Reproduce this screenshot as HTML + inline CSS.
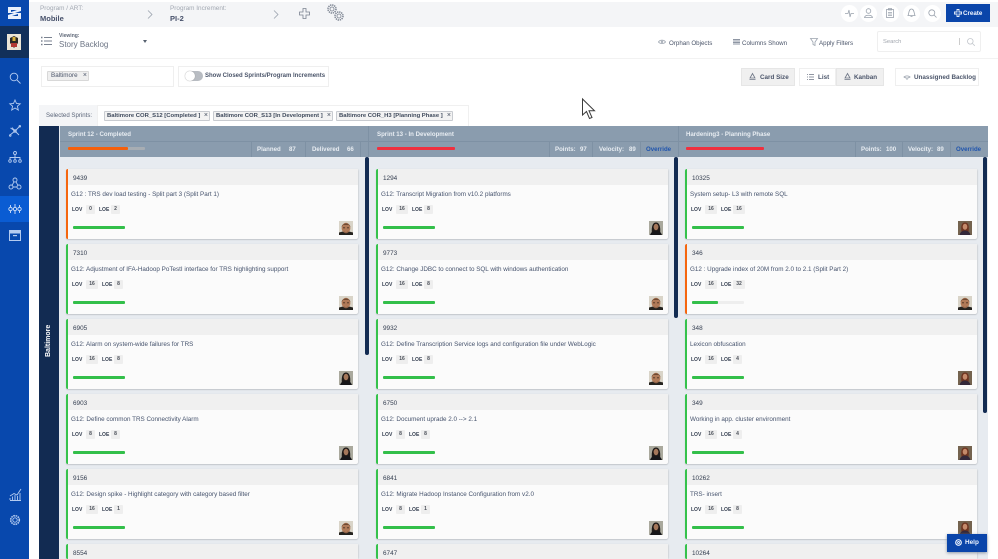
<!DOCTYPE html>
<html><head><meta charset="utf-8"><style>
html,body{margin:0;padding:0;background:#fff;overflow:hidden}
#p{position:relative;width:998px;height:559px;overflow:hidden;background:#fff;font-family:"Liberation Sans",sans-serif;color:#3a4660;font-size:6.2px;filter:blur(.3px)}
#p div,#p span,#p svg{position:absolute;white-space:nowrap;box-sizing:border-box}
svg{overflow:visible}
.i{fill:none;stroke:#b4cbf0;stroke-width:.9}
.g{fill:none;stroke:#9aa2ad;stroke-width:.8}
.c{width:292px;height:70px;background:#fbfbfb;border-left:2px solid #35c24c;border-radius:2px;box-shadow:0 1px 1px #c3c7cc,1px 0 1px #d5d8dc}
.c.o{border-left-color:#f5660f}
.h{left:0;top:0;right:0;height:16px;background:#f0f0f0}
.n{left:5px;top:6px;font-size:6.4px;color:#333d4f}
.t{left:3px;top:22px;font-size:6.3px;color:#46536d}
.l{top:38px;font-size:5px;font-weight:bold;color:#333d4f}
.b{top:36px;height:9px;background:#eee;border-radius:1px;font-size:5px;font-weight:bold;color:#4a4f58;text-align:center;line-height:9px}
.pr{left:5px;top:56.500px;width:52px;height:3px;background:#33bf4a;border-radius:1px}
.a{left:271px;top:52px;width:14px;height:14px}
.ht{color:#e8edf2;font-weight:bold;font-size:6.1px}
.d{width:1px;top:142px;height:15px;background:#7e91a4}
.chip{top:111px;height:10px;border:1px solid #c8cbd0;background:#f3f3f3;font-size:5.9px;font-weight:bold;line-height:8px;padding-left:2px;color:#3f4a5c;border-radius:1px}
.x{right:1px;top:0;font-size:7px;line-height:8px;font-weight:normal}
.btn{top:68px;height:18px;font-size:6.3px;line-height:18px;color:#4b556a;font-weight:bold;border:1px solid #efefef}
.tb{top:40px;font-size:6.2px;color:#4b556a}
.cir{top:5px;width:17px;height:17px;border-radius:50%;background:#fff}
</style></head><body><div id="p">
<svg width="0" height="0" style="position:absolute"><defs>
<symbol id="man" viewBox="0 0 14 14"><rect width="14" height="14" fill="#d9d4c8"/><path d="M0 14V11.500L4 10.500H10L14 11.500V14Z" fill="#25231f"/><ellipse cx="7" cy="7" rx="4.400" ry="5.200" fill="#b07a58"/><path d="M2.600 6C2.800 1.500 11.200 1.500 11.400 6L10 3.800H4Z" fill="#5a3a26"/><path d="M4 6.800H6M8 6.800H10" stroke="#4a3022" stroke-width=".9"/><path d="M4.500 10c1.500 1.600 3.500 1.600 5 0l-.8 1.800H5.300Z" fill="#7a5440"/></symbol>
<symbol id="wom" viewBox="0 0 14 14"><rect width="14" height="14" fill="#aaa99d"/><path d="M3 13C2 5 4 1.500 7 1.500S12 5 11 13Z" fill="#1f1a18"/><ellipse cx="7" cy="6" rx="2.400" ry="3.200" fill="#a4775a"/><path d="M1 14c1-3 3-4 6-4s5 1 6 4Z" fill="#17171a"/></symbol>
<symbol id="red" viewBox="0 0 14 14"><rect width="14" height="14" fill="#74634f"/><path d="M3.500 11C2.500 4 4 1.500 7 1.500S11.500 4 10.500 11Z" fill="#6e3420"/><ellipse cx="7" cy="5.800" rx="2.300" ry="3" fill="#c48a6b"/><path d="M1.500 14c.8-3 3-4.500 5.500-4.500s4.700 1.500 5.500 4.500Z" fill="#33283a"/></symbol>
</defs></svg>

<!-- top bars -->
<div style="left:29px;top:2px;width:969px;height:25px;background:#f4f5f7"></div>
<div style="left:29px;top:58px;width:969px;height:1px;background:#f2f2f2"></div>
<!-- sidebar -->
<div style="left:0;top:0;width:29px;height:559px;background:#0848ad"></div>
<div style="left:0;top:26px;width:29px;height:32px;background:#12305a"></div>
<div style="left:0;top:196px;width:29px;height:26px;background:#0a5cd3"></div>
<svg style="left:7px;top:6px" width="15" height="14" viewBox="0 0 15 14"><path d="M1 1H14V5L8 7H14V13H1V9L7 7H1Z" fill="#e8f0fb"/><path d="M4 4H10L4 6ZM11 10H5L11 8Z" fill="#0848ad"/></svg>
<svg style="left:7px;top:34px" width="14" height="16" viewBox="0 0 14 16"><rect width="14" height="16" fill="#ece6d6"/><path d="M3 4L7 2 11 4V9L7 14 3 9Z" fill="#2b2a25"/><path d="M4 9H10V13H4Z" fill="#b23a33"/><rect x="5.500" y="3" width="3" height="4" fill="#d8b13a"/></svg>
<svg class="i" style="left:9px;top:72px" width="12" height="12" viewBox="0 0 12 12"><circle cx="5" cy="5" r="3.800"/><path d="M8 8L11.500 11.500"/></svg>
<svg class="i" style="left:9px;top:99px" width="12" height="12" viewBox="0 0 12 12"><path d="M6 1L7.500 4.500 11.200 4.800 8.400 7.200 9.300 11 6 9 2.700 11 3.600 7.200.8 4.800 4.500 4.500Z"/></svg>
<svg class="i" style="left:9px;top:125px" width="12" height="12" viewBox="0 0 12 12"><path d="M1 10L6 6 11 1M1.500 3L6 6 10 10M3 2.500L6 6"/><circle cx="6" cy="6" r="1.300"/><circle cx="10.800" cy="1.200" r=".8"/><circle cx="1.200" cy="10.500" r=".8"/></svg>
<svg class="i" style="left:8px;top:151px" width="14" height="12" viewBox="0 0 14 12"><circle cx="7" cy="2" r="1.500"/><path d="M7 3.500V9M2 9V6.500H12V9"/><circle cx="2" cy="10" r="1.300"/><circle cx="7" cy="10" r="1.300"/><circle cx="12" cy="10" r="1.300"/></svg>
<svg class="i" style="left:8px;top:177px" width="14" height="13" viewBox="0 0 14 13"><circle cx="7" cy="3" r="2"/><circle cx="3" cy="10" r="2"/><circle cx="11" cy="10" r="2"/><path d="M6 5L4 8.300M8 5L10 8.300M5 10H9"/></svg>
<svg class="i" style="left:8px;top:203px;stroke:#d5e3f8" width="14" height="12" viewBox="0 0 14 12"><circle cx="2.500" cy="6" r="1.700"/><circle cx="7" cy="6" r="1.700"/><circle cx="11.500" cy="6" r="1.700"/><path d="M2.500 2V4M7 1V4M11.500 2V4M2.500 8V10M7 8V11M11.500 8V10"/></svg>
<svg style="left:9px;top:230px" width="12" height="11" viewBox="0 0 12 11"><rect x=".5" y=".5" width="11" height="10" fill="#0848ad" stroke="#b4cbf0"/><rect x="1" y="1" width="10" height="2.500" fill="#b4cbf0"/><rect x="4" y="5" width="4" height="1.200" fill="#b4cbf0"/></svg>
<svg class="i" style="left:9px;top:488px" width="13" height="13" viewBox="0 0 13 13"><path d="M1 8L5 5.500 8 7 12 1M1 12.500H12M1 10V12M3.500 8.500V12M6 7V12M8.500 8V12M11 5V12"/></svg>
<svg class="i" style="left:9px;top:514px" width="12" height="12" viewBox="0 0 12 12"><circle cx="6" cy="6" r="2.200"/><circle cx="6" cy="6" r="4.300" stroke-dasharray="1.600 .7" stroke-width="1.600"/></svg>

<!-- header -->
<div style="left:40px;top:5px;color:#a2a8b2;font-size:6.400px">Program / ART:</div>
<div style="left:40px;top:14px;color:#46506a;font-size:7.500px;font-weight:bold">Mobile</div>
<svg class="g" style="left:147px;top:10px" width="6" height="9"><path d="M1 .5L5 4.500 1 8.500"/></svg>
<div style="left:170px;top:5px;color:#a2a8b2;font-size:6.400px">Program Increment:</div>
<div style="left:170px;top:14px;color:#46506a;font-size:7.500px;font-weight:bold">PI-2</div>
<svg class="g" style="left:273px;top:10px" width="6" height="9"><path d="M1 .5L5 4.500 1 8.500"/></svg>
<svg class="g" style="left:299px;top:8px;stroke:#7a8290" width="11" height="11" viewBox="0 0 11 11"><path d="M4 .5H7V4H10.500V7H7V10.500H4V7H.5V4H4Z"/></svg>
<svg class="g" style="left:326px;top:3px;stroke:#7a8290" width="19" height="19" viewBox="0 0 19 19"><circle cx="6" cy="6" r="2"/><circle cx="6" cy="6" r="4" stroke-dasharray="1.300 .8" stroke-width="1.500"/><circle cx="13" cy="13" r="2"/><circle cx="13" cy="13" r="4" stroke-dasharray="1.300 .8" stroke-width="1.500"/></svg>
<div class="cir" style="left:841px"></div><div class="cir" style="left:860px"></div><div class="cir" style="left:882px"></div><div class="cir" style="left:903px"></div><div class="cir" style="left:924px"></div>
<svg class="g" style="left:845px;top:9px" width="9" height="9" viewBox="0 0 9 9"><path d="M0 4.500H3L4 1 5 8 6 4.500H9"/></svg>
<svg class="g" style="left:864px;top:8px" width="9" height="10" viewBox="0 0 9 10"><circle cx="4.500" cy="3" r="2.300"/><path d="M.5 9.500C1 6.500 8 6.500 8.500 9.500Z"/></svg>
<svg class="g" style="left:886px;top:8px" width="8" height="10" viewBox="0 0 8 10"><rect x=".5" y="1.500" width="7" height="8"/><path d="M2.500.5H5.500V2H2.500ZM2 4.500H6M2 6H6M2 7.500H6"/></svg>
<svg class="g" style="left:907px;top:8px" width="9" height="10" viewBox="0 0 9 10"><path d="M1 7.500C2 6 1.500 1 4.500 1S7 6 8 7.500ZM3.500 8.500H5.500"/></svg>
<svg class="g" style="left:928px;top:9px" width="9" height="9" viewBox="0 0 9 9"><circle cx="3.800" cy="3.800" r="3"/><path d="M6 6L8.500 8.500"/></svg>
<div style="left:946px;top:4px;width:44px;height:18px;background:#0a45aa;color:#f0f5ff;font-size:6.200px;font-weight:bold;line-height:19px;padding-left:17px">Create</div>
<svg class="i" style="left:954px;top:9px;stroke:#e8f0fb" width="8" height="8" viewBox="0 0 8 8"><path d="M3 .5H5V3H7.500V5H5V7.500H3V5H.5V3H3Z"/></svg>

<!-- row 2 -->
<svg class="g" style="left:41px;top:36px;stroke:#7a8290" width="11" height="10" viewBox="0 0 11 10"><path d="M3 1.500H11M3 5H11M3 8.500H11" stroke-width="1"/><path d="M0 1.500H1.500M0 5H1.500M0 8.500H1.500" stroke-width="1.500"/></svg>
<div style="left:59px;top:33px;font-size:5px;color:#5f6878;font-weight:bold">Viewing:</div>
<div style="left:59px;top:40px;font-size:8px;color:#6d7585">Story Backlog</div>
<div style="left:143px;top:40px;width:0;height:0;border:2px solid transparent;border-top:3px solid #55606f"></div>
<svg class="g" style="left:658px;top:39px" width="8" height="6" viewBox="0 0 8 6"><path d="M.5 3C2 .5 6 .5 7.500 3 6 5 2 5 .5 3Z"/><circle cx="4" cy="2.800" r=".8"/></svg>
<div class="tb" style="left:669px">Orphan Objects</div>
<svg style="left:733px;top:39px" width="7" height="6"><path d="M0 .5H7M0 2H7M0 3.500H7M0 5H7" stroke="#8e96a3"/></svg>
<div class="tb" style="left:742px">Columns Shown</div>
<svg class="g" style="left:810px;top:38px" width="8" height="8" viewBox="0 0 8 8"><path d="M.5.5H7.500L5 4V7.500L3 6.500V4Z"/></svg>
<div class="tb" style="left:819px">Apply Filters</div>
<div style="left:877px;top:31px;width:104px;height:21px;border:1px solid #efefef;border-radius:2px"></div>
<div style="left:883px;top:39px;font-size:5.800px;color:#a0a5ad">Search</div>
<div style="left:959px;top:38px;width:1px;height:7px;background:#ccc"></div>
<svg class="g" style="left:967px;top:38px;stroke:#c2c6cc" width="8" height="8" viewBox="0 0 8 8"><circle cx="3.300" cy="3.300" r="2.800"/><path d="M5.500 5.500L7.800 7.800"/></svg>

<!-- row 3 -->
<div style="left:41px;top:66px;width:133px;height:21px;border:1px solid #efefef"></div>
<div style="left:47px;top:71px;width:42px;height:10px;background:#efefef;border:1px solid #d8d8d8;font-size:6.300px;line-height:8px;padding-left:3px;color:#4b556a;border-radius:1px">Baltimore<span class="x">&#215;</span></div>
<div style="left:178px;top:66px;width:151px;height:21px;border:1px solid #efefef"></div>
<div style="left:185px;top:71px;width:18px;height:10px;border-radius:5px;background:#b8bcc2"></div>
<div style="left:185px;top:71px;width:10px;height:10px;border-radius:5px;background:#fff;box-shadow:0 0 1px #888"></div>
<div style="left:205px;top:73px;font-size:6px;font-weight:bold;color:#4b556a">Show Closed Sprints/Program Increments</div>

<div class="btn" style="left:741px;width:54px;background:#f0f0f0;border-color:#e6e6e6;padding-left:18px">Card Size</div>
<div class="btn" style="left:799px;width:37px;padding-left:18px">List</div>
<div class="btn" style="left:836px;width:48px;background:#f0f0f0;border-color:#e6e6e6;padding-left:17px">Kanban</div>
<div class="btn" style="left:895px;width:84px;padding-left:18px">Unassigned Backlog</div>
<svg class="g" style="left:749px;top:73px;stroke:#6d7585" width="7" height="7" viewBox="0 0 7 7"><path d="M3.500.5L6 5H1ZM.5 6.500H6.500"/></svg>
<svg class="g" style="left:807px;top:74px;stroke:#6d7585" width="7" height="6" viewBox="0 0 7 6"><path d="M2 .5H7M2 3H7M2 5.500H7M0 .5H1M0 3H1M0 5.500H1"/></svg>
<svg class="g" style="left:844px;top:73px;stroke:#6d7585" width="7" height="7" viewBox="0 0 7 7"><path d="M3.500.5L6 5H1ZM.5 6.500H6.500"/></svg>
<svg class="g" style="left:904px;top:75px" width="6" height="5" viewBox="0 0 6 5"><path d="M0 2C2 .5 4 .5 6 2 4 3.500 2 3.500 0 2ZM3 3V5"/></svg>

<!-- cursor -->
<svg style="left:581px;top:98px" width="15" height="22" viewBox="0 0 15 22"><path d="M1.500 1V17L5.500 13.500 8.500 20.500 11 19.500 8 12.800H13.500Z" fill="#fff" stroke="#3c3c3c" stroke-width="1"/></svg>

<!-- selected sprints -->
<div style="left:39px;top:105px;width:58px;height:21px;background:#f4f5f7"></div>
<div style="left:97px;top:105px;width:372px;height:21px;border:1px solid #f0f0f0;border-bottom:0"></div>
<div style="left:46px;top:112px;font-size:6.100px;color:#5a6478">Selected Sprints:</div>
<div class="chip" style="left:104px;width:106px">Baltimore COR_S12 [Completed ]<span class="x">&#215;</span></div>
<div class="chip" style="left:213px;width:120px">Baltimore COR_S13 [In Development ]<span class="x">&#215;</span></div>
<div class="chip" style="left:336px;width:117px">Baltimore COR_H3 [Planning Phase ]<span class="x">&#215;</span></div>

<!-- board -->
<div style="left:39px;top:126px;width:949px;height:433px;background:#e7ebf0"></div>
<div style="left:39px;top:126px;width:20px;height:433px;background:#122b52"></div>
<div style="left:42px;top:345px;width:14px;height:10px;line-height:10px;text-align:center;color:#fff;font-size:7px;font-weight:bold;transform:rotate(-90deg);overflow:visible"><span style="position:static">Baltimore</span></div>
<div style="left:60px;top:126px;width:928px;height:31px;background:#8a9cae"></div>
<div style="left:60px;top:141px;width:928px;height:1px;background:#7e91a4"></div>
<div style="left:59px;top:126px;width:1px;height:31px;background:#e7ebf0"></div>
<div style="left:368px;top:126px;width:1px;height:31px;background:#7e91a4"></div>
<div style="left:678px;top:126px;width:1px;height:31px;background:#7e91a4"></div>

<div class="ht" style="left:68px;top:131px">Sprint 12 - Completed</div>
<div class="ht" style="left:377px;top:131px">Sprint 13 - In Development</div>
<div class="ht" style="left:686px;top:131px">Hardening3 - Planning Phase</div>

<div style="left:68px;top:147px;width:77px;height:3px;background:#a7adb3;border-radius:1px"></div>
<div style="left:68px;top:147px;width:60px;height:3px;background:#f5600c;border-radius:1px"></div>
<div style="left:377px;top:147px;width:78px;height:3px;background:#f0303f;border-radius:1px"></div>
<div style="left:686px;top:147px;width:78px;height:3px;background:#f0303f;border-radius:1px"></div>

<div class="d" style="left:251px"></div><div class="d" style="left:305px"></div><div class="d" style="left:360px"></div>
<div class="ht" style="left:257px;top:146px">Planned</div><div class="ht" style="left:289px;top:146px">87</div>
<div class="ht" style="left:312px;top:146px">Delivered</div><div class="ht" style="left:347px;top:146px">66</div>

<div class="d" style="left:549px"></div><div class="d" style="left:592px"></div><div class="d" style="left:640px"></div>
<div class="ht" style="left:555px;top:146px">Points:</div><div class="ht" style="left:580px;top:146px">97</div>
<div class="ht" style="left:599px;top:146px">Velocity:</div><div class="ht" style="left:629px;top:146px">89</div>
<div class="ht" style="left:646px;top:146px;color:#1f54ad">Override</div>

<div class="d" style="left:855px"></div><div class="d" style="left:902px"></div><div class="d" style="left:950px"></div>
<div class="ht" style="left:861px;top:146px">Points:</div><div class="ht" style="left:886px;top:146px">100</div>
<div class="ht" style="left:908px;top:146px">Velocity:</div><div class="ht" style="left:937px;top:146px">89</div>
<div class="ht" style="left:956px;top:146px;color:#1f54ad">Override</div>

<div style="left:365px;top:157px;width:3.500px;height:198px;background:#122b52;border-radius:2px"></div>
<div style="left:674px;top:157px;width:3.500px;height:161px;background:#122b52;border-radius:2px"></div>
<div style="left:983px;top:157px;width:3.500px;height:256px;background:#122b52;border-radius:2px"></div>

<!-- col 1 -->
<div class="c o" style="left:66px;top:169px"><div class="h"></div><div class="n">9439</div><div class="t">G12 : TRS dev load testing - Split part 3 (Split Part 1)</div><div class="l" style="left:4px">LOV</div><div class="b" style="left:18px;width:9px">0</div><div class="l" style="left:31px">LOE</div><div class="b" style="left:43px;width:9px">2</div><div class="pr"></div><svg class="a"><use href="#man"/></svg></div>
<div class="c" style="left:66px;top:244px"><div class="h"></div><div class="n">7310</div><div class="t">G12: Adjustment of IFA-Hadoop PoTestI interface for TRS highlighting support</div><div class="l" style="left:4px">LOV</div><div class="b" style="left:18px;width:12px">16</div><div class="l" style="left:34px">LOE</div><div class="b" style="left:46px;width:9px">8</div><div class="pr"></div><svg class="a"><use href="#man"/></svg></div>
<div class="c" style="left:66px;top:319px"><div class="h"></div><div class="n">6905</div><div class="t">G12: Alarm on system-wide failures for TRS</div><div class="l" style="left:4px">LOV</div><div class="b" style="left:18px;width:12px">16</div><div class="l" style="left:34px">LOE</div><div class="b" style="left:46px;width:9px">8</div><div class="pr"></div><svg class="a"><use href="#wom"/></svg></div>
<div class="c" style="left:66px;top:394px"><div class="h"></div><div class="n">6903</div><div class="t">G12: Define common TRS Connectivity Alarm</div><div class="l" style="left:4px">LOV</div><div class="b" style="left:18px;width:9px">8</div><div class="l" style="left:31px">LOE</div><div class="b" style="left:43px;width:9px">8</div><div class="pr"></div><svg class="a"><use href="#wom"/></svg></div>
<div class="c" style="left:66px;top:469px"><div class="h"></div><div class="n">9156</div><div class="t">G12: Design spike - Highlight category with category based filter</div><div class="l" style="left:4px">LOV</div><div class="b" style="left:18px;width:12px">16</div><div class="l" style="left:34px">LOE</div><div class="b" style="left:46px;width:9px">1</div><div class="pr"></div><svg class="a"><use href="#man"/></svg></div>
<div class="c" style="left:66px;top:544px;height:15px"><div class="h"></div><div class="n">8554</div></div>

<!-- col 2 -->
<div class="c" style="left:376px;top:169px"><div class="h"></div><div class="n">1294</div><div class="t">G12: Transcript Migration from v10.2 platforms</div><div class="l" style="left:4px">LOV</div><div class="b" style="left:18px;width:12px">16</div><div class="l" style="left:34px">LOE</div><div class="b" style="left:46px;width:9px">8</div><div class="pr"></div><svg class="a"><use href="#wom"/></svg></div>
<div class="c" style="left:376px;top:244px"><div class="h"></div><div class="n">9773</div><div class="t">G12: Change JDBC to connect to SQL with windows authentication</div><div class="l" style="left:4px">LOV</div><div class="b" style="left:18px;width:12px">16</div><div class="l" style="left:34px">LOE</div><div class="b" style="left:46px;width:9px">8</div><div class="pr"></div><svg class="a"><use href="#man"/></svg></div>
<div class="c" style="left:376px;top:319px"><div class="h"></div><div class="n">9932</div><div class="t">G12: Define Transcription Service logs and configuration file under WebLogic</div><div class="l" style="left:4px">LOV</div><div class="b" style="left:18px;width:12px">16</div><div class="l" style="left:34px">LOE</div><div class="b" style="left:46px;width:9px">8</div><div class="pr"></div><svg class="a"><use href="#man"/></svg></div>
<div class="c" style="left:376px;top:394px"><div class="h"></div><div class="n">6750</div><div class="t">G12: Document uprade 2.0 --&gt; 2.1</div><div class="l" style="left:4px">LOV</div><div class="b" style="left:18px;width:9px">8</div><div class="l" style="left:31px">LOE</div><div class="b" style="left:43px;width:9px">8</div><div class="pr"></div><svg class="a"><use href="#wom"/></svg></div>
<div class="c" style="left:376px;top:469px"><div class="h"></div><div class="n">6841</div><div class="t">G12: Migrate Hadoop Instance Configuration from v2.0</div><div class="l" style="left:4px">LOV</div><div class="b" style="left:18px;width:9px">8</div><div class="l" style="left:31px">LOE</div><div class="b" style="left:43px;width:9px">1</div><div class="pr"></div><svg class="a"><use href="#wom"/></svg></div>
<div class="c" style="left:376px;top:544px;height:15px"><div class="h"></div><div class="n">6747</div></div>

<!-- col 3 -->
<div class="c" style="left:685px;top:169px"><div class="h"></div><div class="n">10325</div><div class="t">System setup- L3 with remote SQL</div><div class="l" style="left:4px">LOV</div><div class="b" style="left:18px;width:12px">16</div><div class="l" style="left:34px">LOE</div><div class="b" style="left:46px;width:12px">16</div><div class="pr"></div><svg class="a"><use href="#red"/></svg></div>
<div class="c o" style="left:685px;top:244px"><div class="h"></div><div class="n">346</div><div class="t">G12 : Upgrade index of 20M from 2.0 to 2.1 (Split Part 2)</div><div class="l" style="left:4px">LOV</div><div class="b" style="left:18px;width:12px">16</div><div class="l" style="left:34px">LOE</div><div class="b" style="left:46px;width:12px">32</div><div class="pr" style="background:#eee"></div><div class="pr" style="width:26px"></div><svg class="a"><use href="#man"/></svg></div>
<div class="c" style="left:685px;top:319px"><div class="h"></div><div class="n">348</div><div class="t">Lexicon obfuscation</div><div class="l" style="left:4px">LOV</div><div class="b" style="left:18px;width:12px">16</div><div class="l" style="left:34px">LOE</div><div class="b" style="left:46px;width:9px">4</div><div class="pr"></div><svg class="a"><use href="#red"/></svg></div>
<div class="c" style="left:685px;top:394px"><div class="h"></div><div class="n">349</div><div class="t">Working in app. cluster environment</div><div class="l" style="left:4px">LOV</div><div class="b" style="left:18px;width:12px">16</div><div class="l" style="left:34px">LOE</div><div class="b" style="left:46px;width:9px">4</div><div class="pr"></div><svg class="a"><use href="#red"/></svg></div>
<div class="c" style="left:685px;top:469px"><div class="h"></div><div class="n">10262</div><div class="t">TRS- insert</div><div class="l" style="left:4px">LOV</div><div class="b" style="left:18px;width:12px">16</div><div class="l" style="left:34px">LOE</div><div class="b" style="left:46px;width:9px">8</div><div class="pr"></div><svg class="a"><use href="#red"/></svg></div>
<div class="c" style="left:685px;top:544px;height:15px"><div class="h"></div><div class="n">10264</div></div>

<!-- help -->
<div style="left:947px;top:534px;width:40px;height:18px;background:#0a45aa;color:#f0f5ff;font-size:6.400px;font-weight:bold;line-height:18px;padding-left:18px;box-shadow:0 1px 3px #8a96a6">Help</div>
<svg class="i" style="left:955px;top:539px;stroke:#e8f0fb" width="7" height="7" viewBox="0 0 7 7"><circle cx="3.500" cy="3.500" r="2.800" stroke-width="1.200"/><circle cx="3.500" cy="3.500" r="1"/></svg>
</div></body></html>
